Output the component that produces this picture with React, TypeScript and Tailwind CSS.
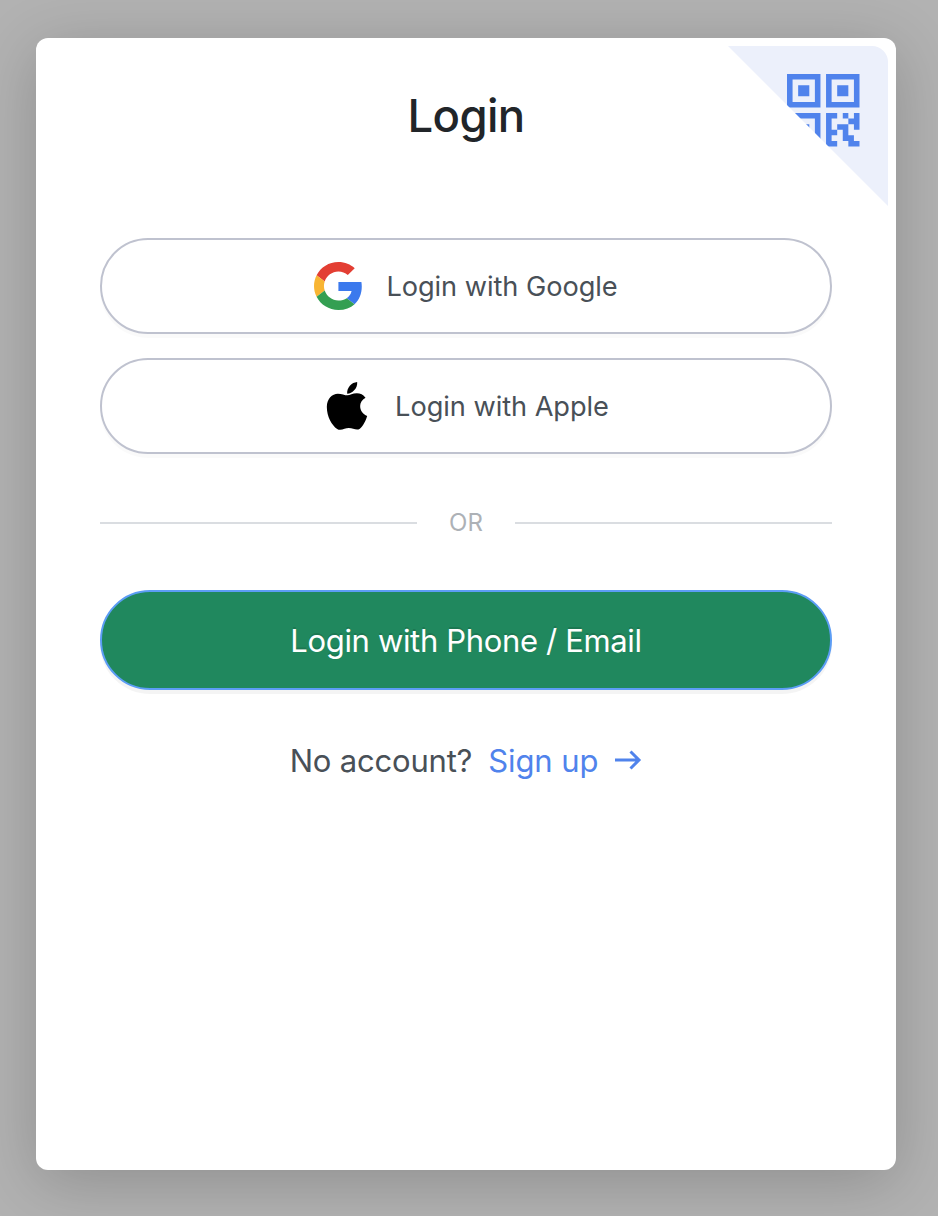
const QR_PATH =
  "M0 0h6v6H0zM1 1v4h4V1zM2 2h2v2H2zM7 0h6v6H7zM8 1v4h4V1zM9 2h2v2H9zM0 7h6v6H0zM1 8v4h4V8zM2 9h2v2H2z" +
  "M7 7h2v1H8v2h1v1H8v1h1v1H7zM10 7h1v1h1V7h1v3h-1V9h-1V8h-1zM9 9h2v2h1v1h1v1h-2v-1h-1v-2H9z";

function GoogleIcon() {
  return (
    <svg className="size-12" viewBox="0 0 47.2 48" preserveAspectRatio="none">
      <path fill="#e33e33" d="M24 9.5c3.54 0 6.71 1.22 9.21 3.6l6.85-6.85C35.9 2.38 30.47 0 24 0 14.62 0 6.51 5.38 2.56 13.22l7.98 6.19C12.43 13.72 17.74 9.5 24 9.5z" />
      <path fill="#3b79ed" d="M46.98 24.55c0-1.57-.15-3.09-.38-4.55H24v9.02h12.94c-.58 2.96-2.26 5.48-4.78 7.18l7.73 6c4.51-4.18 7.09-10.36 7.09-17.65z" />
      <path fill="#f8b533" d="M10.53 28.59c-.48-1.45-.76-2.99-.76-4.59s.27-3.14.76-4.59l-7.98-6.19C.92 16.46 0 20.12 0 24c0 3.88.92 7.54 2.56 10.78l7.97-6.19z" />
      <path fill="#349f52" d="M24 48c6.48 0 11.93-2.13 15.89-5.81l-7.73-6c-2.15 1.45-4.92 2.3-8.16 2.3-6.26 0-11.57-4.22-13.47-9.91l-7.98 6.19C6.51 42.62 14.62 48 24 48z" />
    </svg>
  );
}

function AppleIcon() {
  return (
    <svg className="size-12" viewBox="3.500 12 144 144" fill="#000">
      <path d="M77 52C84 52 92 46 105 46C115 46 125 50 131 59C120 66 115 74 115 84C115 98 123 108 136 114C132 128 123 146 114 152C107 157 101 154 94 152C86 149 76 149 68 152C60 156 52 157 46 153C30 142 15 116 15 87C15 62 31 47 48 47C60 47 68 52 77 52z" />
      <path d="M106 12C107 22 103 31 97 37C91 44 84 47 76 47C75 37 79 29 84 23C90 16 98 13 106 12z" />
    </svg>
  );
}

export default function App() {
  return (
    <div className="h-[1216px] w-[938px] overflow-hidden bg-[#b2b2b2] pt-[38px] pl-9 font-['Inter',sans-serif]">
      <main className="relative flex h-[1132px] w-[860px] flex-col rounded-xl bg-white px-16 shadow-[0_12px_64px_rgba(0,0,0,0.2)]">
        <button
          aria-label="QR code"
          className="absolute top-2 right-2 flex size-40 justify-end rounded-tr-2xl bg-[#ecf0fb] pt-[28.4px] pr-[28.2px] [clip-path:polygon(0_0,100%_0,100%_100%)]"
        >
          <svg className="size-[72.5px]" viewBox="0 0 13 13" fill="#5083ec" fillRule="evenodd">
            <path d={QR_PATH} />
          </svg>
        </button>

        <h1 className="mt-12 text-center text-[45.5px] leading-[60px] font-medium tracking-[-0.6px] text-[#212529]">
          Login
        </h1>

        <div className="mt-[92px] flex flex-col gap-6">
          <button className="flex h-24 items-center justify-center gap-6 rounded-full border-2 border-[#bfc2cf] text-[27.2px] text-[#495057] shadow-[0_4px_0_rgba(0,0,0,0.02)]">
            <GoogleIcon />
            <span className="pt-[3px] tracking-[-0.05px]">Login with Google</span>
          </button>
          <button className="flex h-24 items-center justify-center gap-6 rounded-full border-2 border-[#bfc2cf] text-[27.2px] text-[#495057] shadow-[0_4px_0_rgba(0,0,0,0.02)]">
            <AppleIcon />
            <span className="pt-[3px] tracking-[-0.05px]">Login with Apple</span>
          </button>
        </div>

        <div className="mt-12 flex h-[42px] items-center gap-8">
          <div className="h-0.5 flex-1 bg-[#dadde1]" />
          <span className="text-2xl text-[#adb1b6]">OR</span>
          <div className="h-0.5 flex-1 bg-[#dadde1]" />
        </div>

        <button className="mt-[46px] h-[100px] rounded-full border-2 border-[#5c9df5] bg-[#20885e] pt-[3px] text-[31px] text-white shadow-[0_4px_0_rgba(0,0,0,0.045)] [text-shadow:0_-2px_0_rgba(0,0,0,0.12)]">
          <span className="tracking-[-0.35px]">Login with Phone / Email</span>
        </button>

        <div className="mt-[47px] flex h-12 items-center justify-center text-[31px] text-[#495057]">
          <span className="tracking-[-0.2px]">No account?</span>
          <a className="ml-4 flex items-center gap-4 text-[#5083ec]">
            <span className="tracking-[-0.1px]">Sign up</span>
            <svg className="mb-0.5 h-5 w-7" viewBox="0 0 28 20" fill="none" stroke="currentColor" strokeWidth="3">
              <path d="M1 10h24M16.500 1.500 25 10l-8.500 8.500" />
            </svg>
          </a>
        </div>
      </main>
    </div>
  );
}
